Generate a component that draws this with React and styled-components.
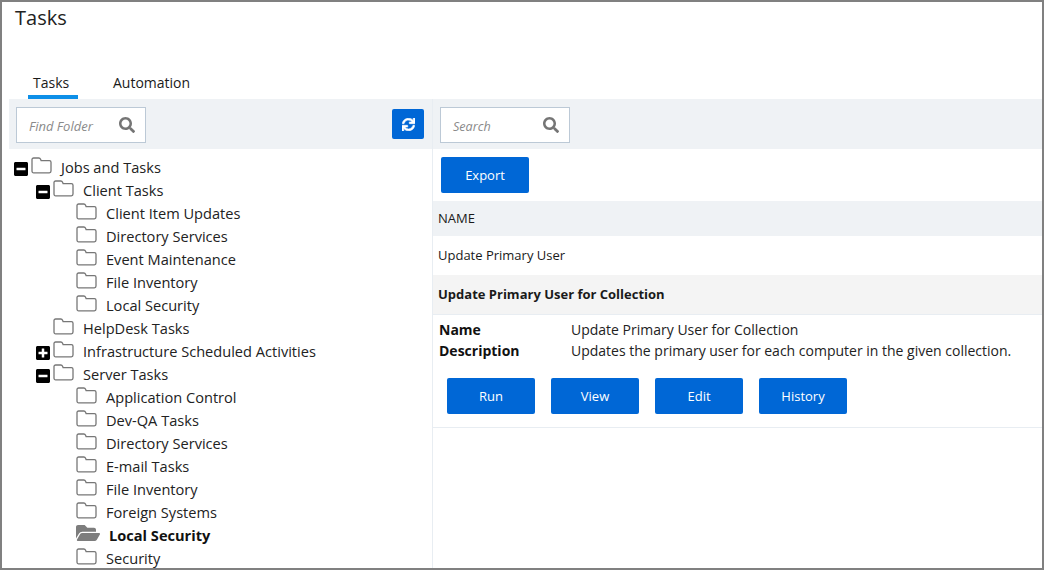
import React from 'react';
import styled, { createGlobalStyle } from 'styled-components';
import { FaSearch, FaSync, FaFolderOpen, FaMinusSquare, FaPlusSquare } from 'react-icons/fa';

const GlobalStyle = createGlobalStyle`
  html, body {
    margin: 0;
    padding: 0;
    background: #fff;
  }
  * {
    box-sizing: border-box;
  }
`;

const Frame = styled.div`
  width: 1044px;
  height: 570px;
  border: 2px solid #808080;
  background: #fff;
  overflow: hidden;
  font-family: "Open Sans", sans-serif;
  color: #1a1a1a;
  display: flex;
  flex-direction: column;
`;

const Title = styled.h1`
  margin: 0;
  height: 66px;
  padding: 2px 0 0 13px;
  font-size: 20px;
  line-height: 27px;
  font-weight: 400;
  color: #222;
`;

const TabBar = styled.div`
  height: 31px;
  padding-left: 26px;
  display: flex;
  gap: 30px;
`;

const Tab = styled.div`
  padding: 5px 0 0 5px;
  width: ${p => p.$width}px;
  font-size: 14px;
  line-height: 20px;
  white-space: nowrap;
  border-bottom: 4px solid ${p => (p.$active ? '#0d8fe8' : 'transparent')};
`;

const Columns = styled.div`
  flex: 1;
  min-height: 0;
  margin-left: 7px;
  display: flex;
`;

const LeftPane = styled.div`
  width: 424px;
  border-right: 1px solid #e8edf2;
  display: flex;
  flex-direction: column;
`;

const RightPane = styled.div`
  flex: 1;
  display: flex;
  flex-direction: column;
`;

const Toolbar = styled.div`
  height: 50px;
  flex: none;
  background: #eff2f5;
  padding: 8px 8px 7px 7px;
  display: flex;
  align-items: flex-start;
  justify-content: space-between;
`;

const SearchBox = styled.div`
  width: 130px;
  height: 36px;
  background: #fff;
  border: 1px solid #bcc9d6;
  padding: 2px 10px 0 ${p => p.$pad}px;
  display: flex;
  align-items: center;
  justify-content: space-between;
  font-size: ${p => p.$size}px;
  font-style: italic;
  color: #8a8a8a;
  svg {
    color: #757575;
    font-size: 16px;
    margin-top: -2px;
  }
`;

const IconButton = styled.button`
  width: 32px;
  height: 30px;
  margin-top: 2px;
  border: none;
  border-radius: 2px;
  background: #0067d6;
  color: #fff;
  font-size: 13px;
  padding: 0;
  display: flex;
  align-items: center;
  justify-content: center;
  svg {
    stroke: #fff;
    stroke-width: 24px;
  }
`;

const Tree = styled.ul`
  list-style: none;
  margin: 0;
  padding: 7px 0 0 5px;
  overflow: hidden;
`;

const Row = styled.li`
  height: 23px;
  padding-left: ${p => Math.floor(p.$level * 22.5)}px;
  display: flex;
  align-items: center;
  font-size: 14.6px;
  line-height: 23px;
  color: #222;
`;

const Toggle = styled.span`
  width: 14px;
  height: 23px;
  flex: none;
  display: flex;
  align-items: center;
  justify-content: center;
  font-size: 16px;
  color: #000;
  padding-top: 3px;
  margin-right: 3px;
`;

const Spacer = styled.span`
  width: 17px;
  flex: none;
`;

const FolderIcon = styled.svg`
  width: 21px;
  height: 17px;
  flex: none;
  margin-right: 9px;
  margin-top: -5px;
`;

const OpenIcon = styled.span`
  width: 24px;
  flex: none;
  margin-right: 9px;
  margin-top: -5px;
  color: #7d7d7d;
  font-size: 24px;
  height: 24px;
  display: flex;
  align-items: center;
`;

const Label = styled.span`
  font-weight: ${p => (p.$bold ? 700 : 400)};
  white-space: nowrap;
  color: ${p => (p.$bold ? '#111' : '#222')};
`;

const ExportBar = styled.div`
  height: 52px;
  padding: 8px 0 0 8px;
`;

const ActionButton = styled.button`
  width: 88px;
  height: 36px;
  border: none;
  border-radius: 2px;
  background: #0067d6;
  color: #fff;
  font-family: inherit;
  font-size: 13px;
  padding: 0;
`;

const HeaderRow = styled.div`
  height: 35px;
  background: #eff2f5;
  padding: 0 0 2px 5px;
  display: flex;
  align-items: center;
  font-size: 13px;
`;

const ItemRow = styled.div`
  height: 39px;
  padding: 0 0 2px 5px;
  display: flex;
  align-items: center;
  font-size: 13px;
`;

const DetailHeader = styled.div`
  height: 40px;
  background: #f4f4f4;
  border-bottom: 1px solid #e8edf2;
  padding: 0 0 2px 5px;
  display: flex;
  align-items: center;
  font-size: 13px;
  font-weight: 700;
`;

const DetailBody = styled.div`
  height: 113px;
  padding: 4px 0 0 6px;
  border-bottom: 1px solid #e8edf2;
`;

const Field = styled.div`
  display: flex;
  height: 21px;
  align-items: center;
  font-size: 14px;
`;

const FieldName = styled.span`
  width: 132px;
  font-weight: 700;
  color: #111;
`;

const FieldValue = styled.span`
  color: #222;
`;

const Actions = styled.div`
  display: flex;
  gap: 16px;
  padding: 17px 0 0 8px;
`;

const Folder = () => (
  <FolderIcon viewBox="0 0 21 17" fill="none" stroke="#777" strokeWidth="1.3">
    <path d="M2.6 1h5.2c1 0 1.5.6 1.8 1.3l.5 1.4h8.3c.9 0 1.6.7 1.6 1.6v8.8c0 1-.7 1.7-1.6 1.7H2.6c-.9 0-1.6-.7-1.6-1.7V2.6C1 1.7 1.7 1 2.6 1z" />
  </FolderIcon>
);

const tree = [
  { name: 'Jobs and Tasks', level: 0, toggle: 'minus' },
  { name: 'Client Tasks', level: 1, toggle: 'minus' },
  { name: 'Client Item Updates', level: 2 },
  { name: 'Directory Services', level: 2 },
  { name: 'Event Maintenance', level: 2 },
  { name: 'File Inventory', level: 2 },
  { name: 'Local Security', level: 2 },
  { name: 'HelpDesk Tasks', level: 1 },
  { name: 'Infrastructure Scheduled Activities', level: 1, toggle: 'plus' },
  { name: 'Server Tasks', level: 1, toggle: 'minus' },
  { name: 'Application Control', level: 2 },
  { name: 'Dev-QA Tasks', level: 2 },
  { name: 'Directory Services', level: 2 },
  { name: 'E-mail Tasks', level: 2 },
  { name: 'File Inventory', level: 2 },
  { name: 'Foreign Systems', level: 2 },
  { name: 'Local Security', level: 2, selected: true },
  { name: 'Security', level: 2 },
];

const App = () => (
  <Frame>
    <GlobalStyle />
    <Title>Tasks</Title>
    <TabBar>
      <Tab $active $width={50}>Tasks</Tab>
      <Tab $width={87}>Automation</Tab>
    </TabBar>
    <Columns>
      <LeftPane>
        <Toolbar>
          <SearchBox $pad={12} $size={13}>
            Find Folder
            <FaSearch />
          </SearchBox>
          <IconButton aria-label="Refresh"><FaSync /></IconButton>
        </Toolbar>
        <Tree>
          {tree.map((item, i) => (
            <Row key={i} $level={item.level}>
              {item.toggle === 'minus' && <Toggle><FaMinusSquare /></Toggle>}
              {item.toggle === 'plus' && <Toggle><FaPlusSquare /></Toggle>}
              {!item.toggle && <Spacer />}
              {item.selected ? <OpenIcon><FaFolderOpen /></OpenIcon> : <Folder />}
              <Label $bold={item.selected}>{item.name}</Label>
            </Row>
          ))}
        </Tree>
      </LeftPane>
      <RightPane>
        <Toolbar>
          <SearchBox $pad={12} $size={12.6}>
            Search
            <FaSearch />
          </SearchBox>
        </Toolbar>
        <ExportBar>
          <ActionButton>Export</ActionButton>
        </ExportBar>
        <HeaderRow>NAME</HeaderRow>
        <ItemRow>Update Primary User</ItemRow>
        <DetailHeader>Update Primary User for Collection</DetailHeader>
        <DetailBody>
          <Field>
            <FieldName>Name</FieldName>
            <FieldValue>Update Primary User for Collection</FieldValue>
          </Field>
          <Field>
            <FieldName>Description</FieldName>
            <FieldValue>Updates the primary user for each computer in the given collection.</FieldValue>
          </Field>
          <Actions>
            <ActionButton>Run</ActionButton>
            <ActionButton>View</ActionButton>
            <ActionButton>Edit</ActionButton>
            <ActionButton>History</ActionButton>
          </Actions>
        </DetailBody>
      </RightPane>
    </Columns>
  </Frame>
);

export default App;
